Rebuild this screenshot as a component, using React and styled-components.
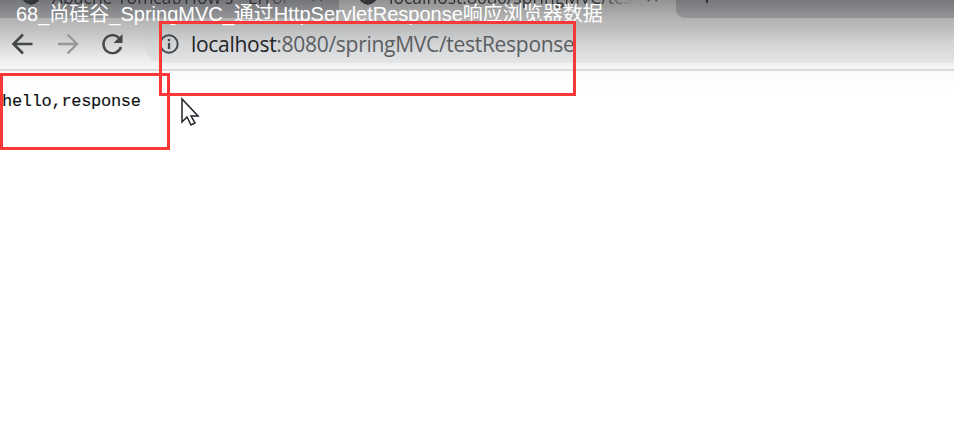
import React from 'react';
import styled, { createGlobalStyle } from 'styled-components';

const Global = createGlobalStyle`
  body { margin: 0; background: #fff; overflow: hidden; }
  * { box-sizing: border-box; }
`;
const Screen = styled.main`
  position: relative;
  width: 954px;
  height: 426px;
  overflow: hidden;
  background: #fff;
  font-family: "Open Sans", "Noto Sans", sans-serif;
`;
const TabStrip = styled.div`
  display: flex;
  height: 18px;
  background: linear-gradient(#929292, #b2b2b2);
`;
const Tab = styled.div`
  display: flex;
  gap: 11px;
  width: ${(p) => p.$width}px;
  height: 18px;
  padding-left: ${(p) => p.$inset}px;
  overflow: hidden;
  border-bottom-right-radius: ${(p) => (p.$active ? 0 : 9)}px;
  background: ${(p) => (p.$active ? 'none' : 'linear-gradient(#757679, #949598)')};
`;
const TabIcon = styled.svg`
  width: 20px;
  height: 20px;
  margin-top: -15px;
  flex: none;
`;
const TabTitle = styled.span`
  width: ${(p) => p.$width}px;
  margin-top: -15px;
  overflow: hidden;
  white-space: nowrap;
  font-size: 17.5px;
  line-height: 24px;
  color: #303236;
  mask-image: linear-gradient(90deg, #000 86%, transparent);
`;
const TabClose = styled.svg`
  width: 11px;
  height: 11px;
  margin: -9px 0 0 2px;
`;
const NewTab = styled.div`
  flex: 1;
  height: 18px;
  padding-left: 25px;
  border-bottom-left-radius: 9px;
  background: linear-gradient(#76777b, #949598);
  svg { display: block; width: 12px; height: 12px; margin-top: -9px; }
`;
const Toolbar = styled.div`
  display: flex;
  align-items: center;
  height: 53px;
  border-bottom: 2px solid #dadada;
  background: linear-gradient(#b2b2b2 0, #bababa 7px, #c5c5c5 15px, #e9e9e9 38px, #f7f7f7 51px);
`;
const Nav = styled.div`
  display: flex;
  gap: 19px;
  padding-left: 9px;
  width: 144px;
  svg { width: 26px; height: 26px; }
`;
const Address = styled.div`
  display: flex;
  align-items: center;
  flex: 1;
  height: 39px;
  margin-bottom: 1px;
  padding: 1px 0 0 15px;
  gap: 12px;
  border-radius: 20px 0 0 20px;
  background: linear-gradient(#b6b7b7, #d0d1d2 45%, #e5e6e8);
`;
const Url = styled.span`
  font-size: 21px;
  letter-spacing: -0.29px;
  color: #5b5e61;
  white-space: nowrap;
  b { font-weight: 400; color: #202327; }
`;
const Content = styled.div`
  height: 355px;
  padding: 20px 2px;
  background: linear-gradient(#fafafa, #fff 18px);
`;
const Output = styled.pre`
  margin: 0;
  color: #111;
  font: 17px/22px "Liberation Mono", monospace;
  letter-spacing: -0.3px;
  -webkit-text-stroke: 0.15px #111;
`;
const VideoTitle = styled.div`
  position: absolute;
  top: 1px;
  left: 16px;
  color: #fff;
  white-space: nowrap;
  font: 20px/26px "Liberation Sans", "Noto Sans CJK SC", sans-serif;
`;
const Highlight = styled.div`
  position: absolute;
  left: ${(p) => p.$x}px;
  top: ${(p) => p.$y}px;
  width: ${(p) => p.$w}px;
  height: ${(p) => p.$h}px;
  border: 3px solid #fb3737;
`;
const Pointer = styled.svg`
  position: absolute;
  left: 180px;
  top: 97px;
  width: 21px;
  height: 31px;
`;

const Globe = () => (
  <TabIcon viewBox="0 0 20 20" fill="none" stroke="#333538" strokeWidth="3"><circle cx="10" cy="10" r="8" /><path d="M3 12l5 2 2 4 6-5" /></TabIcon>
);
const Close = () => (
  <TabClose viewBox="0 0 12 12" stroke="#505255" strokeWidth="1.8"><path d="M1 1l10 10M11 1L1 11" /></TabClose>
);

export default function App() {
  return (
    <Screen>
      <Global />
      <TabStrip>
        <Tab $width={339} $inset={21}><Globe /><TabTitle $width={247}>Apache Tomcat/How's - Error</TabTitle><Close /></Tab>
        <Tab $width={337} $inset={19} $active><Globe /><TabTitle $width={245}>localhost:8080/springMVC/testResponse</TabTitle><Close /></Tab>
        <NewTab><svg viewBox="0 0 12 12" stroke="#303236" strokeWidth="2"><path d="M6 0v12M0 6h12" /></svg></NewTab>
      </TabStrip>
      <Toolbar>
        <Nav>
          <svg viewBox="0 0 26 26" fill="none" stroke="#44474a" strokeWidth="2.6"><path d="M23.5 13H5M14 3.5L4.5 13l9.500 9.500" /></svg>
          <svg viewBox="0 0 26 26" fill="none" stroke="#96989a" strokeWidth="2.4"><path d="M4 13h18M13.500 3.500L23 13l-9.500 9.500" /></svg>
          <svg viewBox="0 0 26 26" fill="none" stroke="#44474a" strokeWidth="2.4"><path d="M20.500 7.500A9 9 0 1 0 22 16" /><path d="M23.500 3v9h-9z" fill="#44474a" stroke="none" /></svg>
        </Nav>
        <Address>
          <svg width="20" height="20" viewBox="0 0 20 20" fill="none" stroke="#45484b" strokeWidth="2"><circle cx="10" cy="10" r="8.7" /><path d="M10 9v6M10 5v2.2" strokeWidth="2.3" /></svg>
          <Url><b>localhost</b>:8080/springMVC/testResponse</Url>
        </Address>
      </Toolbar>
      <Content><Output>hello,response</Output></Content>
      <VideoTitle>68_尚硅谷_SpringMVC_通过HttpServletResponse响应浏览器数据</VideoTitle>
      <Highlight $x={159} $y={21} $w={417} $h={75} />
      <Highlight $x={0} $y={73} $w={170} $h={77} />
      <Pointer viewBox="0 0 21 31" fill="#fff" stroke="#202329" strokeWidth="1.5"><path d="M2 2v23l5-5 4 8 4-2-4-7h7z" /></Pointer>
    </Screen>
  );
}
